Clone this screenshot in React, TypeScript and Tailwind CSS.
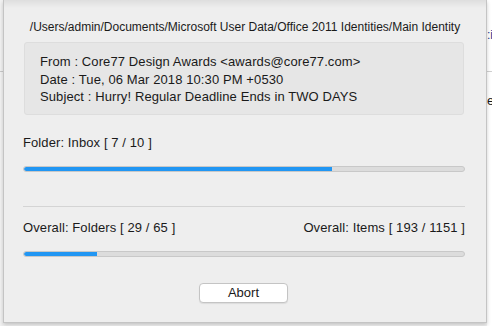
import React from "react";

function Bar({ pct }: { pct: number }) {
  return (
    <div className="h-[6px] w-full rounded-full bg-[#dcdcdc] border border-[#c8c8c8] overflow-hidden">
      <div className="h-full bg-[#2196f3] rounded-l-full" style={{ width: `${pct}%` }} />
    </div>
  );
}

export default function App() {
  return (
    <div
      className="w-[492px] h-[326px] flex bg-[#f4f4f4] overflow-hidden"
      style={{ fontFamily: '"Liberation Sans", Arial, sans-serif' }}
    >
      <div className="w-[3px] shrink-0 h-full bg-[#f2f2f2] flex flex-col">
        <div className="h-[72px] border-b border-[#c9c9c9]" />
      </div>
      <div className="w-[484px] shrink-0 h-[323px] bg-[#eeeeee] border-x border-b border-[#c4c4c4] shadow-[0_2px_4px_rgba(0,0,0,0.2)] flex flex-col relative">
        <div className="absolute top-0 left-0 right-0 h-[8px] bg-gradient-to-b from-[#dedede] to-transparent" />
        <div className="pt-[20px] text-center text-[12px] leading-[15px] text-[#1a1a1a]">
          /Users/admin/Documents/Microsoft User Data/Office 2011 Identities/Main Identity
        </div>
        <div className="mt-[7px] ml-[20px] mr-[22px] h-[73px] bg-[#e6e6e6] border border-[#dddddd] rounded-[3px] pl-[15px] pt-[10px] text-[13px] leading-[17.5px] tracking-[0.1px] text-[#1a1a1a]">
          <div>From : Core77 Design Awards &lt;awards@core77.com&gt;</div>
          <div>Date : Tue, 06 Mar 2018 10:30 PM +0530</div>
          <div>Subject : Hurry! Regular Deadline Ends in TWO DAYS</div>
        </div>
        <div className="pl-[19px] pr-[21px]">
          <div className="mt-[20px] text-[13px] leading-[16px] tracking-[0.1px] text-[#1a1a1a]">Folder: Inbox [ 7 / 10 ]</div>
          <div className="mt-[15px]">
            <Bar pct={70} />
          </div>
          <div className="mt-[34px] border-t border-[#d4d4d4]" />
          <div className="mt-[13px] flex justify-between text-[13px] leading-[16px] tracking-[0.1px] text-[#1a1a1a]">
            <span>Overall: Folders [ 29 / 65 ]</span>
            <span>Overall: Items [ 193 / 1151 ]</span>
          </div>
          <div className="mt-[15px]">
            <Bar pct={16.5} />
          </div>
          <div className="mt-[26px] flex justify-center pr-[1px]">
            <button className="w-[89px] h-[20px] bg-white border border-[#c4c4c4] rounded-[4px] text-[13px] leading-[18px] text-[#1a1a1a] shadow-[0_1px_1px_rgba(0,0,0,0.08)]">
              Abort
            </button>
          </div>
        </div>
      </div>
      <div className="flex-1 min-w-0 h-full bg-white flex flex-col">
        <div className="h-[28px]" />
        <div className="h-[14px] text-[12px] leading-[14px] text-[#1a3d8f] overflow-hidden whitespace-nowrap">:i</div>
        <div className="h-[30px] border-b border-[#d0d0d0]" />
        <div className="h-[22px]" />
        <div className="text-[13px] leading-[14px] text-[#1a1a1a] overflow-hidden">e</div>
      </div>
    </div>
  );
}
